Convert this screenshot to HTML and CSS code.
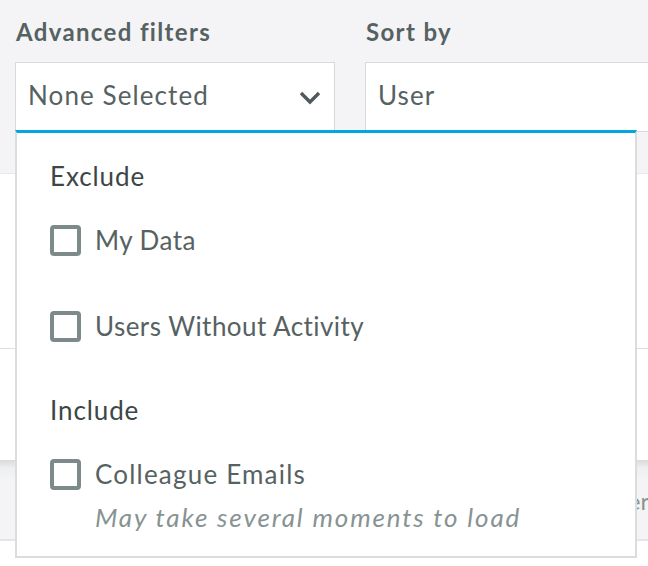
FILE: index.html
```html
<!DOCTYPE html>
<html>
<head>
<meta charset="utf-8">
<link rel="stylesheet" href="styles.css">
</head>
<body>
<div class="page">
  <header class="filters">
    <div class="field field-adv">
      <div class="label">Advanced filters</div>
      <div class="select">
        <span class="select-text">None Selected</span>
        <svg class="chevron" width="22" height="14" viewBox="0 0 22 14"><polyline points="2,2 11,11 20,2" fill="none" stroke="#4f5b5b" stroke-width="3.4"/></svg>
      </div>
    </div>
    <div class="field field-sort">
      <div class="label">Sort by</div>
      <div class="select select-sort">
        <span class="select-text">User</span>
      </div>
    </div>
  </header>
  <section class="row row-a"></section>
  <section class="row row-b"></section>
  <section class="row row-head"><span class="head-text">Member</span></section>
  <section class="row row-c"></section>

  <div class="panel">
    <div class="group-title first">Exclude</div>
    <label class="option opt-1"><span class="box"></span><span class="opt-text">My Data</span></label>
    <label class="option opt-2"><span class="box"></span><span class="opt-text">Users Without Activity</span></label>
    <div class="group-title second">Include</div>
    <label class="option opt-3"><span class="box"></span><span class="opt-text opt-wide">Colleague Emails</span></label>
    <div class="hint">May take several moments to load</div>
  </div>
</div>
</body>
</html>
```

FILE: styles.css
```css
* { box-sizing: border-box; }
html, body { margin: 0; padding: 0; }
body {
  font-family: Lato, "Liberation Sans", sans-serif;
  background: #ffffff;
  width: 648px;
  height: 566px;
  overflow: hidden;
}
.page { position: relative; }

.filters {
  background: #f4f4f6;
  height: 174px;
  border-bottom: 1px solid #e7e8ea;
  display: flex;
  gap: 30px;
  padding: 17px 0 0 15px;
}
.field { display: flex; flex-direction: column; }
.field-adv { width: 320px; }
.field-sort { flex: 1; }
.label {
  font-size: 24px;
  font-weight: 700;
  letter-spacing: 1.35px;
  color: #566161;
  line-height: 30px;
  padding-left: 1px;
}
.select {
  margin-top: 15px;
  height: 70px;
  background: #fff;
  border: 1px solid #d6dadd;
  display: flex;
  align-items: flex-start;
  justify-content: space-between;
  padding: 17px 13px 0 12px;
}
.select-sort { margin-right: -10px; }
.select-text {
  font-size: 26px;
  letter-spacing: 1.1px;
  color: #566262;
  line-height: 30px;
}
.chevron { margin-top: 11px; }

.row-a { height: 175px; border-bottom: 1px solid #dcdfe1; }
.row-b { height: 111px; }
.row-head {
  height: 81px;
  background: linear-gradient(#d9dadc 0px, #eeeff1 8px, #f4f4f6 20px);
  border-bottom: 2px solid #e3e5e7;
  padding: 26px 0 0 560px;
}
.head-text { font-size: 24px; color: #8a9595; line-height: 30px; }
.row-c { height: 40px; }

.panel {
  position: absolute;
  left: 15px;
  top: 130px;
  width: 622px;
  height: 428px;
  background: #fff;
  border: 2px solid #dadde0;
  border-top: 3px solid #00a8df;
  padding: 28px 0 0 33px;
  display: flex;
  flex-direction: column;
}
.group-title {
  font-size: 26px;
  letter-spacing: 0.9px;
  color: #3d4646;
  line-height: 30px;
}
.group-title.second { margin-top: 53px; }
.option {
  display: flex;
  align-items: center;
  gap: 14px;
  height: 32px;
}
.opt-1 { margin-top: 33px; }
.opt-2 { margin-top: 54px; }
.opt-3 { margin-top: 33px; }
.box {
  width: 31px;
  height: 31px;
  border: 4px solid #7d8a8a;
  border-radius: 4px;
  flex: none;
}
.opt-text {
  font-size: 26px;
  letter-spacing: 0.45px;
  color: #566262;
  line-height: 30px;
}
.opt-wide { letter-spacing: 1.2px; }
.hint {
  margin-top: 12px;
  padding-left: 45px;
  font-size: 26px;
  letter-spacing: 1.85px;
  font-style: italic;
  color: #879393;
  line-height: 30px;
}
```
